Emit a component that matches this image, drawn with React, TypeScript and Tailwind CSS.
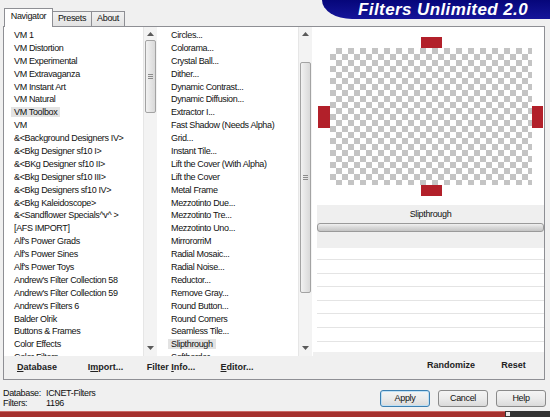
import React from 'react';

const leftItems = [
  'VM 1',
  'VM Distortion',
  'VM Experimental',
  'VM Extravaganza',
  'VM Instant Art',
  'VM Natural',
  'VM Toolbox',
  'VM',
  '&<Background Designers IV>',
  '&<Bkg Designer sf10 I>',
  '&<BKg Designer sf10 II>',
  '&<Bkg Designer sf10 III>',
  '&<Bkg Designers sf10 IV>',
  '&<Bkg Kaleidoscope>',
  '&<Sandflower Specials^v^ >',
  '[AFS IMPORT]',
  "Alf's Power Grads",
  "Alf's Power Sines",
  "Alf's Power Toys",
  "Andrew's Filter Collection 58",
  "Andrew's Filter Collection 59",
  "Andrew's Filters 6",
  'Balder Olrik',
  'Buttons & Frames',
  'Color Effects',
  'Color Filters',
];

const rightItems = [
  'Circles...',
  'Colorama...',
  'Crystal Ball...',
  'Dither...',
  'Dynamic Contrast...',
  'Dynamic Diffusion...',
  'Extractor I...',
  'Fast Shadow (Needs Alpha)',
  'Grid...',
  'Instant Tile...',
  'Lift the Cover (With Alpha)',
  'Lift the Cover',
  'Metal Frame',
  'Mezzotinto Due...',
  'Mezzotinto Tre...',
  'Mezzotinto Uno...',
  'MirrororriM',
  'Radial Mosaic...',
  'Radial Noise...',
  'Reductor...',
  'Remove Gray...',
  'Round Button...',
  'Round Corners',
  'Seamless Tile...',
  'Slipthrough',
  'Softborder...',
];

const Arrow = ({ down }: { down?: boolean }) => (
  <svg width="7" height="4" viewBox="0 0 7 4" className="block">
    {down ? <polygon points="0,0 7,0 3.5,4" fill="#5a5a5a" /> : <polygon points="0,4 7,4 3.5,0" fill="#5a5a5a" />}
  </svg>
);

const ScrollBar = ({ thumbTop, thumbH }: { thumbTop: number; thumbH: number }) => (
  <div className="flex h-full w-[14px] flex-col bg-[#f3f3f3] border-l border-[#e6e6e6]">
    <div className="flex h-[12px] items-end justify-center pb-[3px]">
      <Arrow />
    </div>
    <div className="flex-1">
      <div
        className="mx-[1px] flex flex-col items-center justify-center gap-[1px] rounded-[2px] border border-[#a3a3a3] bg-gradient-to-r from-[#f2f2f2] to-[#d9d9d9]"
        style={{ marginTop: thumbTop, height: thumbH }}
      >
        <div className="h-px w-[5px] bg-[#8c8c8c]" />
        <div className="h-px w-[5px] bg-[#8c8c8c]" />
        <div className="h-px w-[5px] bg-[#8c8c8c]" />
      </div>
    </div>
    <div className="flex h-[12px] items-start justify-center pt-[2px]">
      <Arrow down />
    </div>
  </div>
);

const FilterList = ({ items, selected, pad }: { items: string[]; selected: string; pad: string }) => (
  <div className={`flex-1 overflow-hidden pt-[2px] ${pad}`}>
    {items.map((name) => (
      <div key={name} className="h-[12.9px] whitespace-nowrap leading-[12.9px]">
        <span className={name === selected ? 'bg-[#e3e3e3] px-[3px]' : 'px-[3px]'}>{name}</span>
      </div>
    ))}
  </div>
);

const DlgButton = ({ label, primary }: { label: string; primary?: boolean }) => (
  <div
    className={`flex h-[17px] w-[50px] items-center justify-center rounded-[3px] border bg-gradient-to-b from-[#f4f4f4] via-[#ebebeb] to-[#dadada] ${
      primary ? 'border-[#3c7fb1] shadow-[inset_0_0_0_1px_#bfe0f5]' : 'border-[#8a8a8a]'
    }`}
  >
    {label}
  </div>
);

export default function App() {
  return (
    <div className="relative flex h-[417px] w-[550px] flex-col overflow-hidden bg-[#f0f0f0] font-['Liberation_Sans',Arial,sans-serif] text-[9px] tracking-[-0.35px] text-[#111]">
      {/* tabs + banner */}
      <div className="flex h-[26px] items-start">
        <div className="flex h-full items-end pl-[4px]">
          <div className="relative z-10 -mb-px flex h-[19px] w-[49px] items-center justify-center border border-b-0 border-[#8e8f94] bg-white pb-[2px]">
            Navigator
          </div>
          <div className="flex h-[15px] w-[39px] items-center justify-center border border-b-0 border-l-0 border-[#8e8f94] bg-gradient-to-b from-[#f2f2f2] to-[#e3e3e3]">
            Presets
          </div>
          <div className="flex h-[15px] w-[33px] items-center justify-center border border-b-0 border-l-0 border-[#8e8f94] bg-gradient-to-b from-[#f2f2f2] to-[#e3e3e3]">
            About
          </div>
        </div>
        <div className="ml-auto flex h-[19px] w-[228px] items-center justify-end rounded-bl-[30px_19px] bg-gradient-to-b from-[#06067a] to-[#15159a] pr-[22px] text-[17px] font-bold italic leading-none tracking-[0.4px] text-white">
          Filters Unlimited 2.0
        </div>
      </div>

      {/* main panel */}
      <div className="ml-[3px] flex h-[354px] w-[542px] border border-[#8e8f94] bg-[#f0f0f0]">
        {/* left: lists */}
        <div className="flex w-[309px] flex-col">
          <div className="flex h-[329px] bg-white">
            <div className="flex w-[153px]">
              <FilterList items={leftItems} selected="VM Toolbox" pad="pl-[7px]" />
              <ScrollBar thumbTop={1} thumbH={73} />
            </div>
            <div className="w-[3px]" />
            <div className="flex w-[152px]">
              <FilterList items={rightItems} selected="Slipthrough" pad="pl-[8px]" />
              <ScrollBar thumbTop={23} thumbH={231} />
            </div>
          </div>
          <div className="flex flex-1 items-center text-[9px] font-bold tracking-normal text-[#222]">
            <div className="w-[66px] text-center">
              <span className="underline">D</span>atabase
            </div>
            <div className="w-[71px] text-center">
              I<span className="underline">m</span>port...
            </div>
            <div className="w-[60px] text-center">
              Filter <span className="underline">I</span>nfo...
            </div>
            <div className="w-[72px] text-center">
              <span className="underline">E</span>ditor...
            </div>
          </div>
        </div>

        {/* right: preview */}
        <div className="flex flex-1 flex-col">
          <div className="flex h-[325px] flex-col bg-white">
            <div className="h-[178px] pl-[5px] pt-[10px]">
              <div className="grid grid-cols-[12px_202px_11px] grid-rows-[11px_137px_11px]">
                <div />
                <div className="flex justify-center">
                  <div className="h-[11px] w-[21px] bg-[#b2202a]" />
                </div>
                <div />
                <div className="flex items-center">
                  <div className="h-[22px] w-[12px] bg-[#b2202a]" />
                </div>
                <div className="bg-[image:conic-gradient(#c4c4c4_25%,#ffffff_0_50%,#c4c4c4_0_75%,#ffffff_0)] bg-[length:12px_12px]" />
                <div className="flex items-center">
                  <div className="h-[22px] w-[11px] bg-[#b2202a]" />
                </div>
                <div />
                <div className="flex justify-center">
                  <div className="h-[11px] w-[21px] bg-[#b2202a]" />
                </div>
                <div />
              </div>
            </div>
            <div className="ml-[4px] flex h-[43px] flex-col bg-[#efefef]">
              <div className="flex h-[18px] items-center justify-center pt-[1px]">Slipthrough</div>
              <div className="h-[9px] rounded-[3px] border border-[#9a9a9a] bg-gradient-to-b from-[#f0f0f0] via-[#d8d8d8] to-[#c4c4c4]" />
            </div>
            <div className="ml-[4px] flex flex-col">
              <div className="h-[12px] border-b border-[#e4e4e4]" />
              <div className="h-[13.6px] border-b border-[#e4e4e4]" />
              <div className="h-[13.6px] border-b border-[#e4e4e4]" />
              <div className="h-[13.6px] border-b border-[#e4e4e4]" />
              <div className="h-[13.6px] border-b border-[#e4e4e4]" />
              <div className="h-[13.6px] border-b border-[#e4e4e4]" />
              <div className="h-[13.6px] border-b border-[#e4e4e4]" />
            </div>
          </div>
          <div className="flex flex-1 items-center justify-end text-[9px] font-bold tracking-normal text-[#222]">
            <div className="w-[64px] text-center">Randomize</div>
            <div className="w-[61px] text-center">Reset</div>
          </div>
        </div>
      </div>

      {/* status + dialog buttons */}
      <div className="flex h-[31px] items-start">
        <div className="grid grid-cols-[43px_auto] pl-[3px] pt-[8px] leading-[10px]">
          <div>Database:</div>
          <div>ICNET-Filters</div>
          <div>Filters:</div>
          <div>1196</div>
        </div>
        <div className="ml-auto flex gap-[8px] pr-[4px] pt-[10px]">
          <DlgButton label="Apply" primary />
          <DlgButton label="Cancel" />
          <DlgButton label="Help" />
        </div>
      </div>

      {/* bottom strip */}
      <div className="flex h-[6px]">
        <div className="flex-1 border-t border-[#c96a66] bg-[#a4302d]" />
        <div className="flex w-[45px] items-start bg-[#333333]">
          <div className="ml-[1px] mt-[1px] h-[4px] w-[4px] bg-[#e8e8e8]" />
        </div>
      </div>
    </div>
  );
}
